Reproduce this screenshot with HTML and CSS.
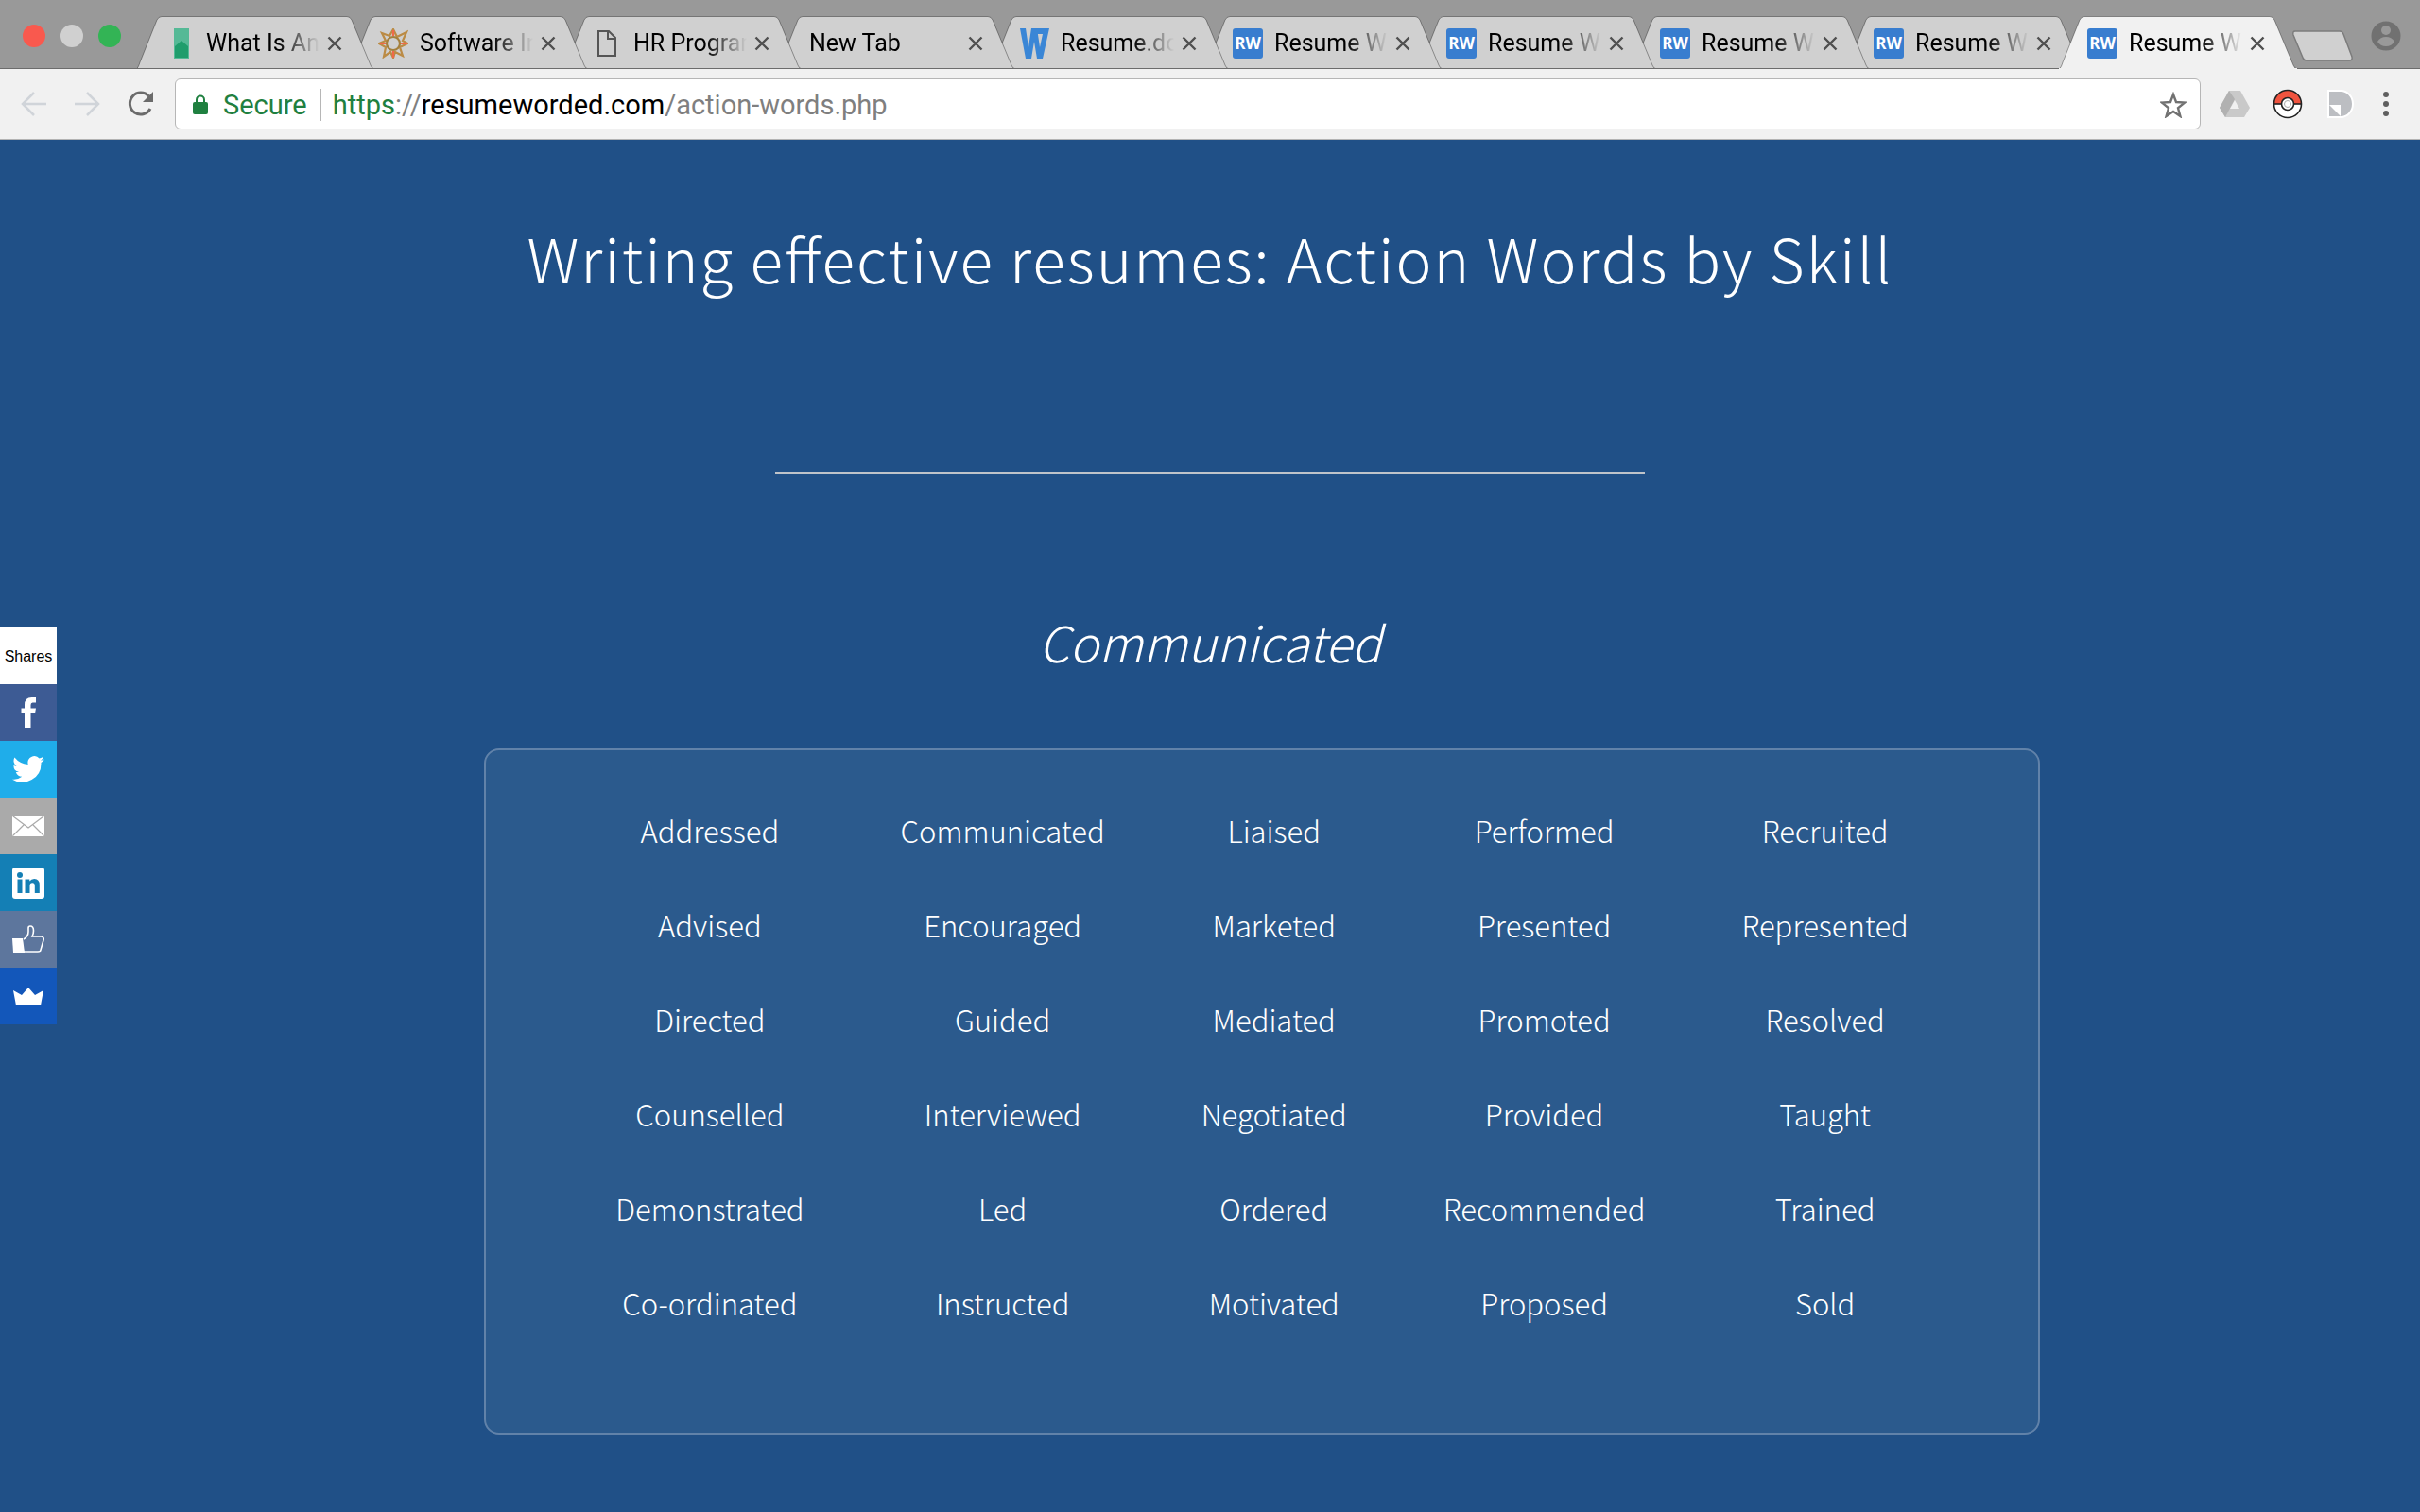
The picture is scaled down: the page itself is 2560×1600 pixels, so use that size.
FILE: index.html
```html
<!DOCTYPE html>
<html lang="en">
<head>
    <meta charset="UTF-8">
    <title>Resume Worded - Action Words</title>
    <link rel="stylesheet" href="styles.css">
</head>
<body>
    <svg class="defs" aria-hidden="true">
        <symbol id="tab" viewBox="0 0 252 56">
            <path class="tab_fill" d="M0 56 C2 55 3 52 4 49 L22 4 Q24 .5 27 .5 H223 Q226 .5 228 4 L248 52 Q249 55 252 56 Z"/>
            <path class="tab_edge" d="M0 56 C2 55 3 52 4 49 L22 4 Q24 .5 27 .5 H223 Q226 .5 228 4 L248 52 Q249 55 252 56"/>
            <path class="tab_base" d="M0 55.500H252"/>
        </symbol>
        <symbol id="close" viewBox="0 0 16 16"><path d="M1.500 1.500 14.500 14.500M14.500 1.500 1.500 14.500" fill="none" stroke="#4f4f4f" stroke-width="2.400"/></symbol>
    </svg>
    <header class="browser">
        <div class="strip">
            <div class="lights"><i class="red"></i><i class="grey"></i><i class="green"></i></div>
            <div class="tabs">
                <div class="tab">
                    <svg class="shape"><use href="#tab"/></svg>
                    <svg class="fav" viewBox="0 0 32 32"><path d="M10 0h16v32H10z" fill="#55b996"/><path d="M11 31V19l7-6 7 6v12z" fill="#1f9d6c"/></svg>
                    <span class="title">What Is An</span>
                    <button class="close" aria-label="Close"><svg><use href="#close"/></svg></button>
                </div>
                <div class="tab">
                    <svg class="shape"><use href="#tab"/></svg>
                    <svg class="fav" viewBox="0 0 32 32" fill="none" stroke-width="2.200"><path d="M16 1l4 8 10-5-4 9 5 3-8 4 3 9-8-4-2 6-3-6-7 5 2-10-7-4 7-3-4-8 8 3z" stroke="#bb8b45"/><path d="M16 2v6M2 16h6M16 24v7M24 16h7" stroke="#f0694a"/><circle cx="16" cy="16" r="7" stroke="#a4803d"/></svg>
                    <span class="title">Software In</span>
                    <button class="close" aria-label="Close"><svg><use href="#close"/></svg></button>
                </div>
                <div class="tab">
                    <svg class="shape"><use href="#tab"/></svg>
                    <svg class="fav" viewBox="0 0 32 32"><path d="M7 3h11l7 7v19H7zM17 3v8h8" fill="none" stroke="#555" stroke-width="2"/></svg>
                    <span class="title">HR Program</span>
                    <button class="close" aria-label="Close"><svg><use href="#close"/></svg></button>
                </div>
                <div class="tab">
                    <svg class="shape"><use href="#tab"/></svg>
                    <span class="title wide">New Tab</span>
                    <button class="close" aria-label="Close"><svg><use href="#close"/></svg></button>
                </div>
                <div class="tab">
                    <svg class="shape"><use href="#tab"/></svg>
                    <svg class="fav" viewBox="0 0 32 32"><path d="M1 0h6l3 20 3-20h6l3 20 3-14h-6V0h13l-7 32h-6l-3-18-3 18H7z" fill="#3a86d6"/></svg>
                    <span class="title">Resume.doc</span>
                    <button class="close" aria-label="Close"><svg><use href="#close"/></svg></button>
                </div>
                <div class="tab">
                    <svg class="shape"><use href="#tab"/></svg>
                    <span class="fav rw">RW</span>
                    <span class="title">Resume W</span>
                    <button class="close" aria-label="Close"><svg><use href="#close"/></svg></button>
                </div>
                <div class="tab">
                    <svg class="shape"><use href="#tab"/></svg>
                    <span class="fav rw">RW</span>
                    <span class="title">Resume W</span>
                    <button class="close" aria-label="Close"><svg><use href="#close"/></svg></button>
                </div>
                <div class="tab">
                    <svg class="shape"><use href="#tab"/></svg>
                    <span class="fav rw">RW</span>
                    <span class="title">Resume W</span>
                    <button class="close" aria-label="Close"><svg><use href="#close"/></svg></button>
                </div>
                <div class="tab">
                    <svg class="shape"><use href="#tab"/></svg>
                    <span class="fav rw">RW</span>
                    <span class="title">Resume W</span>
                    <button class="close" aria-label="Close"><svg><use href="#close"/></svg></button>
                </div>
                <div class="tab active">
                    <svg class="shape"><use href="#tab"/></svg>
                    <span class="fav rw">RW</span>
                    <span class="title">Resume W</span>
                    <button class="close" aria-label="Close"><svg><use href="#close"/></svg></button>
                </div>
            </div>
            <button class="new_tab" aria-label="New tab"><svg viewBox="0 0 66 34"><path d="M4 1h47q3 0 4 3l9 24q1 4-3 4H16q-3 0-4-3L2 5q-1-4 2-4z" fill="#d0d0d0" stroke="#7c7c7c" stroke-width="1.500"/></svg></button>
            <button class="user" aria-label="Profile"><svg viewBox="0 0 32 32"><circle cx="16" cy="16" r="15.500" fill="#717171"/><circle cx="16" cy="10" r="5" fill="#999"/><path d="M7 22q3-5 9-5t9 5q-3 5-9 5t-9-5z" fill="#999"/></svg></button>
        </div>
        <div class="toolbar">
            <div class="nav">
                <button aria-label="Back"><svg viewBox="0 0 28 28"><path d="M27 14H3M14 2 2 14l12 12" fill="none" stroke="#d0d4d9" stroke-width="2.500"/></svg></button>
                <button aria-label="Forward"><svg viewBox="0 0 28 28"><path d="M1 14h24M14 2l12 12-12 12" fill="none" stroke="#d0d4d9" stroke-width="2.500"/></svg></button>
                <button aria-label="Reload"><svg viewBox="0 0 28 28"><path d="M25 19A11.500 11.500 0 1 1 23.500 6" fill="none" stroke="#6b6b6b" stroke-width="3"/><path d="M28 1v11H17z" fill="#6b6b6b"/></svg></button>
            </div>
            <div class="omnibox">
                <svg class="lock" viewBox="0 0 16 22"><path d="M4 8V5.500a4 4 0 0 1 8 0V8" fill="none" stroke="#1f8040" stroke-width="2"/><rect y="8" width="16" height="13" rx="2" fill="#1f8040"/></svg>
                <span class="secure">Secure</span>
                <div class="url" role="textbox" aria-label="Address"><span class="green_text">https</span>://<b>resumeworded.com</b>/action-words.php</div>
                <button aria-label="Bookmark"><svg viewBox="0 0 28 28"><path d="M14 3l3 8 9 .600-7 5.600 2.400 8.800-7.400-5-7.400 5L9 17.200 2 11.600l9-.600z" fill="none" stroke="#717171" stroke-width="2.400"/></svg></button>
            </div>
            <div class="extensions">
                <button aria-label="Drive"><svg viewBox="0 0 32 32"><path d="M10 2h12l10 18-6 10H6L0 20z" fill="#c9c9c9"/><path d="M10 2l6 9-10 19-6-10z" fill="#b1b1b1"/><path d="M16 12l5 9H11z" fill="#f1f1f1"/></svg></button>
                <button aria-label="Pokemon"><svg viewBox="0 0 32 32"><circle cx="16" cy="16" r="14.500" fill="#fff"/><path d="M1.500 16a14.500 14.500 0 0 1 29 0z" fill="#f0543f"/><circle cx="16" cy="16" r="14.500" fill="none" stroke="#222" stroke-width="1.600"/><path d="M1 16h30" stroke="#222" stroke-width="1.600"/><circle cx="16" cy="16" r="6.500" fill="#fff" stroke="#222" stroke-width="1.600"/><circle cx="16" cy="16" r="3.500" fill="none" stroke="#aaa"/></svg></button>
                <button aria-label="Reader"><svg viewBox="0 0 32 32"><path d="M3 2h13a13 14 0 0 1 0 28H3z" fill="#bcbec2" stroke="#fff" stroke-width="2"/><path d="M4 17h12v12z" fill="#fff"/></svg></button>
                <button class="menu" aria-label="Menu"><svg viewBox="0 0 8 28"><circle cx="4" cy="4" r="3"/><circle cx="4" cy="14" r="3"/><circle cx="4" cy="24" r="3"/></svg></button>
            </div>
        </div>
    </header>
    <main>
        <h1>Writing effective resumes: Action Words by Skill</h1>
        <hr>
        <h2>Communicated</h2>
        <div class="box">
            <table>
                <tr><td>Addressed</td><td>Communicated</td><td>Liaised</td><td>Performed</td><td>Recruited</td></tr>
                <tr><td>Advised</td><td>Encouraged</td><td>Marketed</td><td>Presented</td><td>Represented</td></tr>
                <tr><td>Directed</td><td>Guided</td><td>Mediated</td><td>Promoted</td><td>Resolved</td></tr>
                <tr><td>Counselled</td><td>Interviewed</td><td>Negotiated</td><td>Provided</td><td>Taught</td></tr>
                <tr><td>Demonstrated</td><td>Led</td><td>Ordered</td><td>Recommended</td><td>Trained</td></tr>
                <tr><td>Co-ordinated</td><td>Instructed</td><td>Motivated</td><td>Proposed</td><td>Sold</td></tr>
            </table>
        </div>
        <aside class="share">
            <span>Shares</span>
            <a class="facebook" href="#" aria-label="Facebook"><svg viewBox="0 0 34 34"><path d="M13 33V18h-3.500v-5.500H13V9q0-8 7.500-8H25v5.500h-3.500q-2 0-2 2.500v3.500H25l-1 5.500h-4.500v15z"/></svg></a>
            <a class="twitter" href="#" aria-label="Twitter"><svg viewBox="0 0 24 24"><path d="M24 4.600a10 10 0 0 1-2.800.8 5 5 0 0 0 2.100-2.700 10 10 0 0 1-3.100 1.200 4.900 4.900 0 0 0-8.400 4.500A14 14 0 0 1 1.700 3.200a4.900 4.900 0 0 0 1.500 6.500 5 5 0 0 1-2.200-.6 4.900 4.900 0 0 0 3.900 4.900 5 5 0 0 1-2.200.1 4.900 4.900 0 0 0 4.600 3.400A10 10 0 0 1 0 19.500a14 14 0 0 0 21.500-12.400A10 10 0 0 0 24 4.600z"/></svg></a>
            <a class="mail" href="#" aria-label="Email"><svg viewBox="0 0 34 34"><rect y="6" width="34" height="22" rx="2"/><path d="M1 7l16 12L33 7M1 27l11-11M33 27 22 16" fill="none" stroke="#aaa" stroke-width="1.200"/></svg></a>
            <a class="linkedin" href="#" aria-label="LinkedIn"><svg viewBox="0 0 34 34"><rect y="1" width="34" height="33" rx="3"/><g fill="#147fb5"><circle cx="8" cy="9" r="3"/><path d="M5.500 13.500h5V28h-5zM13.500 13.500h4.800v2q1.700-2.500 5-2.500 5.500 0 5.500 6.500V28h-5v-7.500q0-3.300-2.500-3.300-2.800 0-2.800 3.300V28h-5z"/></g></svg></a>
            <a class="like" href="#" aria-label="Like"><svg viewBox="0 0 34 34"><path d="M0 16h11l2 15H1z"/><path d="M12 17q5-3 5-8V5q0-2 2-2 3.500 0 3.500 5 0 3-1.500 6h10q3 1 2 4l-3 10q0 2-3 2H12" fill="none" stroke="#fff" stroke-width="1.600"/></svg></a>
            <a class="sumo" href="#" aria-label="Sumo"><svg viewBox="0 0 34 34"><path d="M1 11l9 5 7-8 7 8 9-5-3 16H4z"/></svg></a>
        </aside>
    </main>
</body>
</html>
```
FILE: styles.css
```css
*{
    margin:0;padding:0;
    box-sizing: border-box;
}
html,body{
    width:100%;
    height:100%;
}
body{
    display: flex;
    flex-direction: column;
    overflow: hidden;
    background-color: #205087;
    font-family: "Noto Sans CJK SC",sans-serif;
}
button{
    border:0;
    background: none;
    flex:none;
}
svg{
    display: block;
}
.defs{
    position: absolute;
    width:0;height:0;
}
/* browser */
.browser{
    flex:none;
    font-family: Roboto,sans-serif;
    border-bottom:1px solid #b3b3b3;
}
.strip{
    display: flex;
    height:73px;
    background-color: #999;
    border-bottom:1px solid #6c6c6c;
    padding-right:20px;
}
.lights{
    display: flex;
    gap:16px;
    width:144px;
    padding:26px 0 0 24px;
}
.lights i{
    width:24px;
    height:24px;
    border-radius: 50%;
}
.red{background-color: #f9594e;}
.grey{background-color: #d0d0d0;}
.green{background-color: #33b455;}
.tabs{
    display: flex;
    padding-top:17px;
    height:73px;
}
.tab{
    position: relative;
    display: flex;
    align-items: center;
    width:252px;
    height:56px;
    padding:2px 34px 0 30px;
    margin-right:-26px;
    color:#000;
    font-size: 25px;
    line-height: 28px;
}
.tab:nth-child(1){z-index: 10;}
.tab:nth-child(2){z-index: 9;}
.tab:nth-child(3){z-index: 8;}
.tab:nth-child(4){z-index: 7;}
.tab:nth-child(5){z-index: 6;}
.tab:nth-child(6){z-index: 5;}
.tab:nth-child(7){z-index: 4;}
.tab:nth-child(8){z-index: 3;}
.tab:nth-child(9){z-index: 2;}
.tab.active{z-index: 11;}
.shape{
    position: absolute;
    left:0;top:0;
    z-index: -1;
    width:252px;
    height:56px;
    color:#d0d0d0;
    --base:#6c6c6c;
}
.active .shape{
    color:#f1f1f1;
    --base:#f1f1f1;
}
.tab_fill{fill:currentColor;}
.tab_edge{fill:none;stroke:#000;stroke-opacity: .35;}
.tab_base{stroke:var(--base);}
.fav{
    flex:none;
    width:32px;
    height:32px;
    margin-right:12px;
}
.rw{
    border-radius: 3px;
    background-color: #387dcf;
    color:#fff;
    font:bold 17px/32px "Open Sans",sans-serif;
    text-align: center;
}
.title{
    flex:1;
    overflow: hidden;
    white-space: nowrap;
    -webkit-mask-image:linear-gradient(to left,transparent,#000 44px);
    mask-image:linear-gradient(to left,transparent,#000 44px);
}
.title.wide{
    padding-left:4px;
}
.close{
    margin-left:8px;
}
.close svg{
    width:16px;
    height:16px;
}
.new_tab{
    margin-left:20px;
    height:66px;
}
.new_tab svg{
    width:66px;
    height:34px;
    margin-top:32px;
}
.new_tab,.user{
    align-self: flex-start;
}
.user{
    margin:22px 0 0 auto;
}
.user svg,.extensions svg{
    width:32px;
    height:32px;
}
.toolbar{
    display: flex;
    align-items: center;
    height:74px;
    padding:0 32px 0 22px;
    background-color: #f1f1f1;
}
.nav{
    display: flex;
    gap:28px;
    width:163px;
}
.nav svg,.omnibox button svg{
    width:28px;
    height:28px;
}
.omnibox{
    flex:1;
    display: flex;
    align-items: center;
    height:54px;
    padding:2px 14px 0 18px;
    border:1px solid #b6b6b6;
    border-radius: 6px;
    background-color: #fff;
    font-size: 29px;
    line-height: 34px;
}
.lock{
    width:16px;
    height:22px;
    margin-right:16px;
}
.secure,.green_text{
    color:#1f8040;
}
.secure{
    padding-right:14px;
    border-right:1px solid #b6b6b6;
}
.url{
    flex:1;
    padding-left:12px;
    color:#7f7f7f;
}
.url b{
    font-weight: normal;
    color:#000;
}
.extensions{
    display: flex;
    align-items: center;
    gap:24px;
    margin-left:20px;
}
.extensions .menu{
    margin-left:4px;
}
.extensions .menu svg{
    width:8px;
    height:28px;
    fill:#5f5f5f;
}
/* page */
main{
    position: relative;
    flex:1;
    padding-top:78px;
    color:#fff;
    text-align: center;
}
h1{
    font-size: 64px;
    line-height: 92px;
    font-weight: 300;
    letter-spacing: 2px;
    font-feature-settings: "liga" 1;
}
hr{
    width:920px;
    height:2px;
    margin:182px auto 137px;
    border:0;
    background-color: #bfc4ca;
}
h2{
    font-size: 52px;
    line-height: 80px;
    font-weight: 300;
    font-style: italic;
}
.box{
    width:calc(60% + 110px);
    margin:73px 0 0 20%;
    padding:35px 0 87px;
    border:2px solid #6182a9;
    border-radius: 16px;
    background-color: #2b5a8d;
}
table{
    margin:0 auto;
    border-collapse: collapse;
}
td{
    height:100px;
    padding:0 51px;
    font-size: 31px;
    line-height: 46px;
    font-weight: 300;
}
.share{
    position: absolute;
    left:0;
    top:516px;
    width:60px;
    font:16px "Liberation Sans",sans-serif;
}
.share span,.share a{
    display: flex;
    align-items: center;
    justify-content: center;
    height:60px;
}
.share span{
    padding-top:2px;
    background-color: #fff;
    color:#000;
}
.share svg{
    width:34px;
    height:34px;
    fill:#fff;
}
.facebook{background-color: #3d5b94;}
.twitter{background-color: #1fadea;}
.mail{background-color: #aaa;}
.linkedin{background-color: #147fb5;}
.like{background-color: #5d769d;}
.sumo{background-color: #1357ba;}
```
